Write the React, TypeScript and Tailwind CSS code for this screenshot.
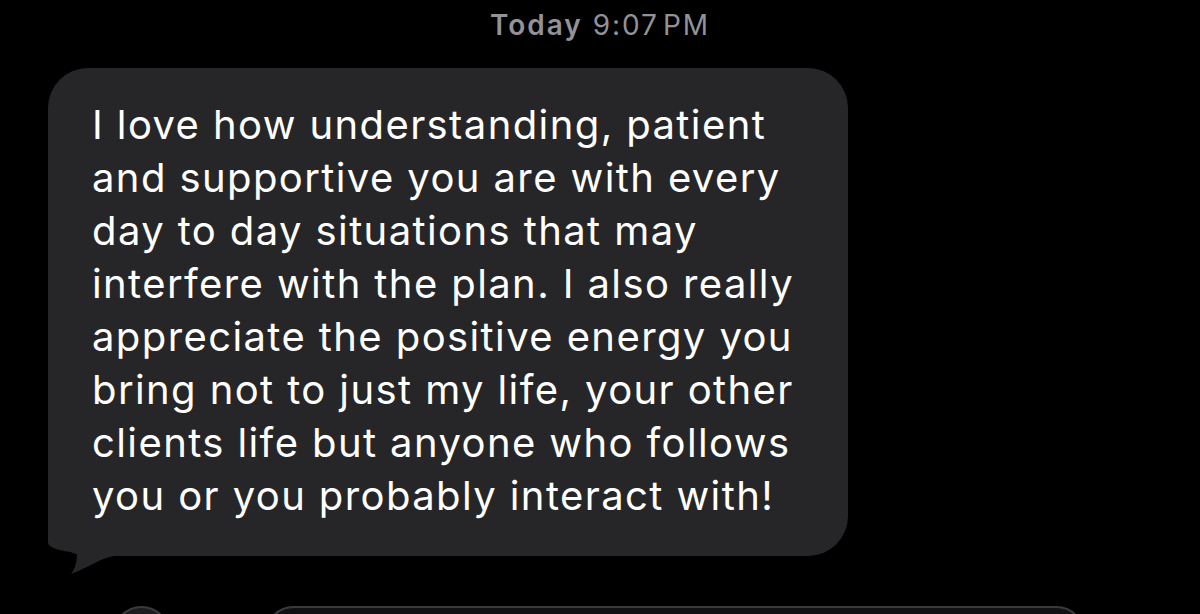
const lines = [
  "I love how understanding, patient",
  "and supportive you are with every",
  "day to day situations that may",
  "interfere with the plan. I also really",
  "appreciate the positive energy you",
  "bring not to just my life, your other",
  "clients life but anyone who follows",
  "you or you probably interact with!",
];

export default function App() {
  return (
    <div
      className="h-[614px] w-[1200px] overflow-hidden bg-black"
      style={{ fontFamily: "Inter, 'Noto Sans', sans-serif" }}
    >
      <div className="flex h-[68px] justify-center pt-[8px] text-[28px] leading-[34px] tracking-[0.07em] text-[#929297]">
        <span className="font-semibold">Today</span>
        <span className="ml-[10px]">9:07</span>
        <span className="ml-[4px]">PM</span>
      </div>

      <div className="relative ml-[48px] w-[800px] rounded-[40px] bg-[#262628] pb-[34px] pl-[44px] pr-[10px] pt-[30px] text-[40px] leading-[53px] tracking-[0.035em] text-white">
        {/* tail at the bottom-left corner */}
        <svg
          className="absolute left-0 top-[440px]"
          width="90"
          height="70"
          viewBox="0 440 90 70"
          aria-hidden="true"
        >
          <path
            d="M0 440 L0 474 C0 481 16 483 29 485 C29 494 27 501 23 506 C38 501 52 490 66 488 L90 488 L90 462 L40 462 L40 440 Z"
            fill="#262628"
          />
        </svg>
        {lines.map((line) => (
          <span key={line} className="relative block whitespace-nowrap">
            {line}
          </span>
        ))}
      </div>

      <div className="mt-[50px] flex items-start">
        <div className="ml-[113px] h-[57px] w-[57px] shrink-0 rounded-full border-2 border-[#3a3a3c] bg-[#1c1c1e]" />
        <div className="ml-[95px] h-[57px] w-[820px] shrink-0 rounded-[30px] border-2 border-[#3a3a3c] bg-[#111113]" />
      </div>
    </div>
  );
}
